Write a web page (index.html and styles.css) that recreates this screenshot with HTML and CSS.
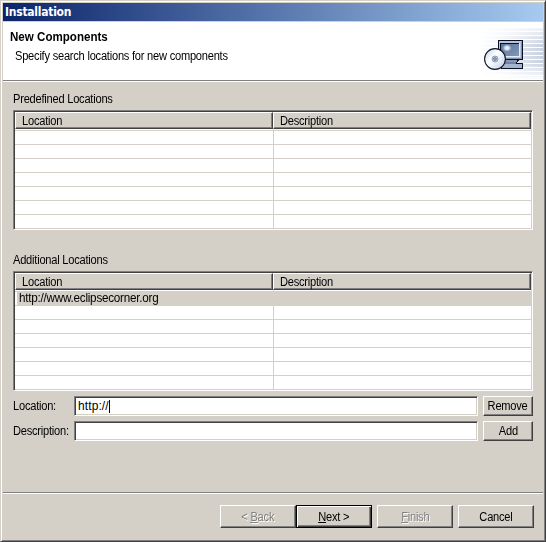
FILE: index.html
```html
<!DOCTYPE html>
<html lang="en">
<head>
<meta charset="utf-8">
<title>Installation</title>
<link rel="stylesheet" href="styles.css">
</head>
<body>
<div class="window">
  <div class="titlebar"><span>Installation</span></div>
  <header class="banner">
    <div class="banner-text">
      <h1><span class="t wide">New Components</span></h1>
      <p><span class="t">Specify search locations for new components</span></p>
    </div>
    <svg class="banner-art" width="75" height="58" viewBox="468 22 75 58">
      <defs>
        <linearGradient id="fade" x1="0" x2="1" y1="0" y2="0"><stop offset="0" stop-color="#fff"/><stop offset=".35" stop-color="#fff" stop-opacity=".75"/><stop offset="1" stop-color="#fff" stop-opacity="0"/></linearGradient>
        <linearGradient id="fadeY" x1="0" x2="0" y1="0" y2="1"><stop offset="0" stop-color="#fff"/><stop offset=".4" stop-color="#fff" stop-opacity="0"/><stop offset=".7" stop-color="#fff" stop-opacity="0"/><stop offset="1" stop-color="#fff"/></linearGradient>
        <linearGradient id="screen" x1="0" x2="1" y1="0" y2="1"><stop offset="0" stop-color="#5d7498"/><stop offset="1" stop-color="#8396bc"/></linearGradient>
        <radialGradient id="glare"><stop offset="0" stop-color="#f0f6fb"/><stop offset=".4" stop-color="#dce8f2"/><stop offset="1" stop-color="#a0b4cc" stop-opacity="0"/></radialGradient>
        <linearGradient id="disc" x1="0" x2="1" y1="0" y2="1"><stop offset="0" stop-color="#b9c9e3"/><stop offset=".4" stop-color="#fff"/><stop offset=".65" stop-color="#e6edf8"/><stop offset="1" stop-color="#b3c4e0"/></linearGradient>
        <pattern id="lines" width="4" height="4" patternUnits="userSpaceOnUse"><path fill="#c8d1e1" d="M0 0h4v3H0z"/></pattern>
      </defs>
      <path fill="url(#lines)" d="M480 27h63v52h-63z"/>
      <path fill="url(#fade)" d="M480 22h63v58h-63z"/>
      <path fill="url(#fadeY)" d="M480 22h63v58h-63z"/>
      <g shape-rendering="crispEdges">
        <path fill="#0b1022" d="M498 40h25v20h-25zM504 60h15v1h-1v1h-1v1h6v6h-22v-6h3z"/>
        <path fill="#b7c5dc" d="M499 41h23v18h-23z"/>
        <path fill="#8193b3" d="M521 42h1v17h-22v-1h21z"/>
        <path fill="#0b1022" d="M500 43h20v14h-20z"/>
        <path fill="url(#screen)" d="M501 44h18v12h-18z"/>
        <path fill="#e5ecf5" d="M519 43h1v14h-19v-1h18z"/>
        <path fill="#8797b7" d="M505 60h12v2h-12z"/>
        <path fill="#a4b3ce" d="M502 64h20v4h-20z"/>
        <path fill="#71819f" d="M505 62h11v2h-11z"/>
      </g>
      <ellipse cx="507" cy="48" rx="5" ry="4" fill="url(#glare)"/>
      <circle cx="495" cy="59" r="10.4" fill="url(#disc)" stroke="#101525" stroke-width="1.1"/>
      <circle cx="495" cy="59" r="3" fill="#b9c6dc" stroke="#8fa0be"/>
      <circle cx="495" cy="59" r="1.2" fill="#fff" stroke="#34425f" stroke-width=".8"/>
    </svg>
  </header>
  <main class="content">
    <div class="caption"><span class="t">Predefined Locations</span></div>
    <div class="table">
      <div class="thead"><div class="th first"><span class="t">Location</span></div><div class="th"><span class="t">Description</span></div></div>
      <div class="tbody"></div>
    </div>
    <div class="caption second"><span class="t">Additional Locations</span></div>
    <div class="table">
      <div class="thead"><div class="th first"><span class="t">Location</span></div><div class="th"><span class="t">Description</span></div></div>
      <div class="tbody"><div class="selected"><span class="t wider">http://www.eclipsecorner.org</span></div></div>
    </div>
    <div class="form">
      <label><span class="t">Location:</span></label><div class="input"><span>http://</span><i class="caret"></i></div><button class="btn"><span class="t mid">Remove</span></button>
      <label><span class="t">Description:</span></label><div class="input"></div><button class="btn"><span class="t mid">Add</span></button>
    </div>
  </main>
  <footer class="footer">
    <button class="btn disabled"><span class="t mid">&lt; <u>B</u>ack</span></button>
    <button class="btn default"><span class="t mid"><u>N</u>ext &gt;</span></button>
    <button class="btn disabled gap"><span class="t mid"><u>F</u>inish</span></button>
    <button class="btn gap"><span class="t mid">Cancel</span></button>
  </footer>
</div>
</body>
</html>
```
FILE: styles.css
```css
* { box-sizing: border-box; }
body { margin: 0; font: 12px/14px "Liberation Sans", Arial, sans-serif; letter-spacing: -.25px; color: #000; }
.t { display: inline-block; transform: scaleX(.925); transform-origin: 0 50%; white-space: nowrap; }
.t.wide { transform: scaleX(.965); }
.t.wider { transform: scaleX(.975); }
.t.mid { transform: scaleX(.925); transform-origin: 50% 50%; }
.window {
  width: 546px; height: 542px; background: #d4d0c8; padding: 2px 1px 0 2px;
  border: 1px solid; border-color: #d4d0c8 #404040 #404040 #d4d0c8;
  box-shadow: inset 1px 1px #fff, inset -1px -1px #808080;
  display: flex; flex-direction: column;
}
.titlebar {
  height: 18px; width: 540px; padding-left: 2px; color: #fff;
  background: linear-gradient(90deg, #0a246a, #a6caf0);
  font: bold 12px/18px "DejaVu Sans Condensed", "DejaVu Sans", sans-serif; font-stretch: condensed;
}
.banner {
  width: 540px; height: 60px; margin-top: 1px; background: #fff;
  display: flex; justify-content: space-between; border-bottom: 1px solid #fff;
  box-shadow: inset 0 -1px #808080;
}
.banner-text { padding: 8px 0 0 7px; }
h1 { margin: 0; font-size: 12px; line-height: 14px; letter-spacing: 0; }
p { margin: 5px 0 0 5px; line-height: 14px; white-space: nowrap; }
.content { padding: 10px 10px 0; height: 410px; }
.caption { height: 18px; }
.caption.second { margin-top: 23px; }
.table {
  width: 520px; height: 120px; background: #fff;
  border: 1px solid; border-color: #808080 #fff #fff #808080;
  padding: 1px;
  box-shadow: inset 1px 1px #404040, inset -1px -1px #d4d0c8;
}
.thead { display: flex; height: 17px; }
.th {
  flex: 1; background: #d4d0c8; padding: 1px 0 0 6px; line-height: 15px;
  border: 1px solid; border-color: #fff #404040 #404040 #fff;
  box-shadow: inset -1px -1px #808080;
}
.th.first { flex: 0 0 258px; }
.tbody {
  height: 99px; padding-left: 2px; display: flow-root;
  background:
    linear-gradient(#d4d0c8, #d4d0c8) 258px 0 / 1px 100% no-repeat,
    repeating-linear-gradient(transparent 0 1px, #d4d0c8 1px 2px, transparent 2px 14px);
}
.selected { margin-top: 1px; background: #d4d0c8; height: 15px; padding-left: 2px; line-height: 15px; }
.form { margin-top: 5px; display: grid; grid-template-columns: 61px 404px 55px; grid-auto-rows: 20px; row-gap: 5px; }
.form .btn { margin-left: 5px; width: 50px; }
.form label { line-height: 21px; white-space: nowrap; }
.input {
  background: #fff; border: 1px solid; border-color: #808080 #fff #fff #808080;
  box-shadow: inset 1px 1px #404040, inset -1px -1px #d4d0c8;
  padding: 0 3px; line-height: 17px; display: flex; align-items: center; letter-spacing: .1px;
}
.caret { width: 1px; height: 13px; background: #000; }
.btn {
  font: inherit; letter-spacing: inherit; color: inherit; padding: 0; margin: 0;
  background: #d4d0c8; border: 1px solid; border-color: #fff #404040 #404040 #fff;
  box-shadow: inset -1px -1px #808080; text-align: center; white-space: nowrap; border-radius: 0;
}
.footer { width: 540px; border-top: 1px solid #808080; box-shadow: inset 0 1px #fff; padding: 12px 0 0 217px; display: flex; }
.footer .btn { width: 76px; height: 23px; }
.footer .gap { margin-left: 5px; }
.footer .default { border-color: #000; box-shadow: inset 1px 1px #fff, inset -1px -1px #404040, inset -2px -2px #808080; }
.footer .disabled { color: #808080; text-shadow: 1px 1px #fff; }
```
